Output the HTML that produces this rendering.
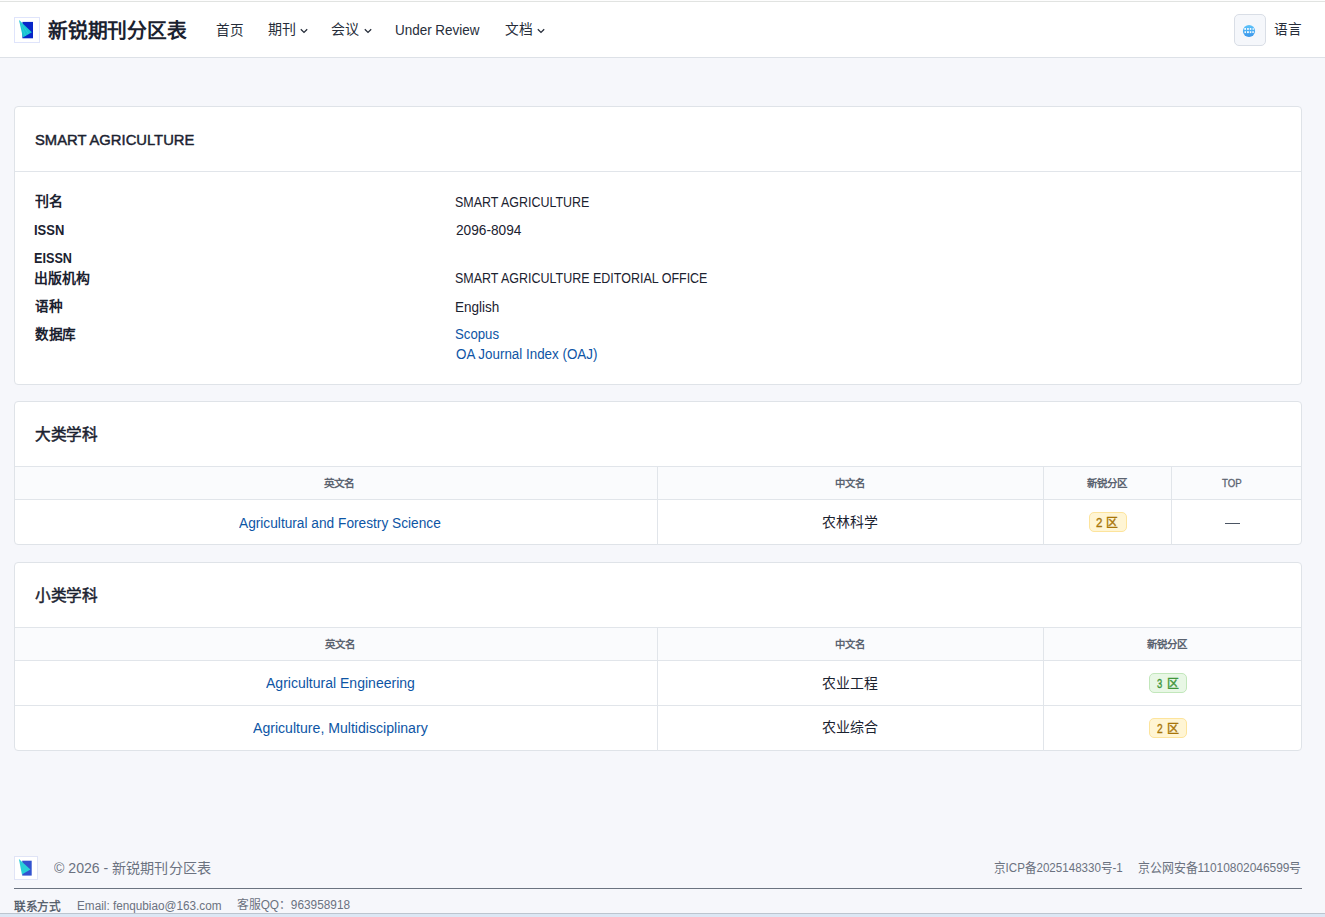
<!DOCTYPE html>
<html lang="zh-CN">
<head>
<meta charset="utf-8">
<title>SMART AGRICULTURE - 新锐期刊分区表</title>
<style>
*{box-sizing:border-box;margin:0;padding:0}
html,body{width:1325px;height:917px;overflow:hidden}
body{font-family:"Liberation Sans",sans-serif;background:#f6f7fb;position:relative}
.topline{position:absolute;left:0;top:0;width:1325px;height:2px;background:#e1e3e1;border-top:1px solid #fdfdfd}
.nav{position:absolute;left:0;top:2px;width:1325px;height:56px;background:#fff;border-bottom:1px solid #dde1e7}
.logo{position:absolute;left:14px;top:17px;width:26px;height:26px;border:1px solid #dfe4fb;background:#fff}
.logo svg{position:absolute;left:0;top:0}
.chev{position:absolute;width:8px;height:6px}
.globe{position:absolute;left:1234px;top:14px;width:32px;height:32px;border:1px solid #d9dee6;border-radius:5px;background:#f5f7fb}
.card{position:absolute;left:14px;width:1288px;background:#fff;border:1px solid #dfe3e8;border-radius:4px}
.hr{position:absolute;left:0;width:1286px;height:1px;background:#e1e5ea}
.thbg{position:absolute;left:0;width:1286px;background:#fafbfd}
.vl{position:absolute;width:1px;background:#e1e5ea}
.badge{position:absolute;width:38px;height:20px;border-radius:5px}
.b2{background:#fff5d4;border:1px solid #fde49c}
.b3{background:#e8f7e5;border:1px solid #c2e7bb}
.dash{position:absolute;width:15px;height:1px;background:#4b5563}
.flogo{position:absolute;left:14px;top:856px;width:24px;height:24px;border:1px solid #e0e4f6;background:#fff}
.flogo svg{position:absolute;left:0;top:0}
.fline{position:absolute;left:14px;top:888px;width:1288px;height:1px;background:#6b7380}
.bstrip{position:absolute;left:0;top:913px;width:1325px;height:4px;background:#dce7f4;border-top:1px solid #bcc5cf}
.t{position:absolute;white-space:nowrap;line-height:1;transform-origin:0 0}
</style>
</head>
<body>

<div class="topline"></div>
<div class="nav"></div>
<div class="logo"><svg width="24" height="24" viewBox="0 0 24 24"><rect x="7.4" y="3.9" width="10.6" height="16.4" fill="#0826c8"/><polygon points="4,2 16.9,14.2 7.9,19.5" fill="#19c4d2"/><path d="M4.6 2.6 L10.5 17.8 M5.2 3.2 L13.5 16.2" stroke="#5fdde6" stroke-width="0.5" opacity="0.6"/></svg></div>
<svg class="chev" style="left:300px;top:28px" viewBox="0 0 8 6"><path d="M0.8 1.2 L4 4.4 L7.2 1.2" fill="none" stroke="#262d3a" stroke-width="1.3"/></svg>
<svg class="chev" style="left:364px;top:28px" viewBox="0 0 8 6"><path d="M0.8 1.2 L4 4.4 L7.2 1.2" fill="none" stroke="#262d3a" stroke-width="1.3"/></svg>
<svg class="chev" style="left:537px;top:28px" viewBox="0 0 8 6"><path d="M0.8 1.2 L4 4.4 L7.2 1.2" fill="none" stroke="#262d3a" stroke-width="1.3"/></svg>
<div class="globe"><svg width="14" height="14" viewBox="0 0 14 14" style="position:absolute;left:7px;top:9px"><defs><linearGradient id="gg" x1="0" y1="0" x2="0" y2="1"><stop offset="0" stop-color="#5cc4fb"/><stop offset="1" stop-color="#3a95ea"/></linearGradient></defs><circle cx="7" cy="7" r="6.1" fill="url(#gg)"/><g fill="#fff" opacity="0.92"><rect x="2.3" y="4" width="1.7" height="1.9"/><rect x="5" y="4.1" width="1.9" height="1.7"/><rect x="7.8" y="4" width="1.5" height="1.9"/><rect x="10.5" y="4.2" width="1.4" height="1.6"/><rect x="2.5" y="7.2" width="1.5" height="1.9"/><rect x="5" y="7.2" width="1.9" height="1.9"/><rect x="7.8" y="7.2" width="1.5" height="1.9"/><rect x="10.3" y="7.2" width="1.5" height="1.8"/></g></svg></div>

<div class="card" style="top:106px;height:279px"><div class="hr" style="top:64px"></div></div>
<div class="card" style="top:401px;height:144px">
  <div class="hr" style="top:64px"></div>
  <div class="thbg" style="top:65px;height:32px"></div>
  <div class="hr" style="top:97px"></div>
  <div class="vl" style="left:642px;top:65px;height:78px"></div>
  <div class="vl" style="left:1028px;top:65px;height:78px"></div>
  <div class="vl" style="left:1156px;top:65px;height:78px"></div>
</div>
<div class="badge b2" style="left:1089px;top:512px"></div>
<div class="dash" style="left:1225px;top:523px"></div>

<div class="card" style="top:562px;height:189px">
  <div class="hr" style="top:64px"></div>
  <div class="thbg" style="top:65px;height:32px"></div>
  <div class="hr" style="top:97px"></div>
  <div class="hr" style="top:142px"></div>
  <div class="vl" style="left:642px;top:65px;height:123px"></div>
  <div class="vl" style="left:1028px;top:65px;height:123px"></div>
</div>
<div class="badge b3" style="left:1149px;top:673px"></div>
<div class="badge b2" style="left:1149px;top:718px"></div>

<div class="flogo"><svg width="22" height="22" viewBox="0 0 22 22"><rect x="7.2" y="3.7" width="9.5" height="14.9" fill="#3253cf"/><polygon points="3.9,2 15.4,12.6 6.9,17.4" fill="#2ad0d8"/></svg></div>
<div class="fline"></div>
<div class="bstrip"></div>

<span class="t" id="brand" style="left:47.60px;top:21.40px;font-size:20px;font-weight:700;color:#1b2230;transform:scaleX(0.9886);">新锐期刊分区表</span>
<span class="t" id="n1" style="left:216.10px;top:22.60px;font-size:14px;font-weight:400;color:#262d3a;transform:scaleX(0.9711);">首页</span>
<span class="t" id="n2" style="left:268.20px;top:22.05px;font-size:14px;font-weight:400;color:#262d3a;transform:scaleX(1.0000);">期刊</span>
<span class="t" id="n3" style="left:331.00px;top:22.05px;font-size:14px;font-weight:400;color:#262d3a;transform:scaleX(1.0000);">会议</span>
<span class="t" id="n4" style="left:395.32px;top:23.28px;font-size:14px;font-weight:400;color:#262d3a;transform:scaleX(0.9607);">Under Review</span>
<span class="t" id="n5" style="left:505.00px;top:22.05px;font-size:14px;font-weight:400;color:#262d3a;transform:scaleX(0.9825);">文档</span>
<span class="t" id="lang" style="left:1274.20px;top:22.05px;font-size:14px;font-weight:400;color:#262d3a;transform:scaleX(0.9728);">语言</span>
<span class="t" id="c1h" style="left:34.56px;top:131.73px;font-size:15px;font-weight:400;color:#1b2230;transform:scaleX(0.9854);-webkit-text-stroke:0.45px #1b2230">SMART AGRICULTURE</span>
<span class="t" id="l1" style="left:35.24px;top:194.39px;font-size:14px;font-weight:700;color:#1b2230;transform:scaleX(0.9938);">刊名</span>
<span class="t" id="l2" style="left:34.12px;top:223.06px;font-size:14px;font-weight:700;color:#1b2230;transform:scaleX(0.9272);">ISSN</span>
<span class="t" id="l3" style="left:34.40px;top:250.90px;font-size:14px;font-weight:700;color:#1b2230;transform:scaleX(0.9031);">EISSN</span>
<span class="t" id="l4" style="left:34.12px;top:270.92px;font-size:14px;font-weight:700;color:#1b2230;transform:scaleX(0.9923);">出版机构</span>
<span class="t" id="l5" style="left:35.48px;top:298.96px;font-size:14px;font-weight:700;color:#1b2230;transform:scaleX(0.9726);">语种</span>
<span class="t" id="l6" style="left:35.40px;top:326.90px;font-size:14px;font-weight:700;color:#1b2230;transform:scaleX(0.9719);">数据库</span>
<span class="t" id="v1" style="left:455.30px;top:194.90px;font-size:14px;font-weight:400;color:#1b2230;transform:scaleX(0.8907);">SMART AGRICULTURE</span>
<span class="t" id="v2" style="left:456.30px;top:222.90px;font-size:14px;font-weight:400;color:#1b2230;transform:scaleX(0.9762);">2096-8094</span>
<span class="t" id="v4" style="left:455.30px;top:270.90px;font-size:14px;font-weight:400;color:#1b2230;transform:scaleX(0.8915);">SMART AGRICULTURE EDITORIAL OFFICE</span>
<span class="t" id="v5" style="left:455.14px;top:299.86px;font-size:14px;font-weight:400;color:#1b2230;transform:scaleX(0.9669);">English</span>
<span class="t" id="v6" style="left:455.30px;top:327.30px;font-size:14px;font-weight:400;color:#0d55a5;transform:scaleX(0.9428);">Scopus</span>
<span class="t" id="v7" style="left:456.30px;top:347.10px;font-size:14px;font-weight:400;color:#0d55a5;transform:scaleX(0.9565);">OA Journal Index (OAJ)</span>
<span class="t" id="c2h" style="left:35.32px;top:427.15px;font-size:16px;font-weight:400;color:#1b2230;transform:scaleX(0.9780);-webkit-text-stroke:0.5px #1b2230">大类学科</span>
<span class="t" id="t2h1" style="left:324.20px;top:478.18px;font-size:10.5px;font-weight:700;color:#5b6370;transform:scaleX(1.0212);">英文名</span>
<span class="t" id="t2h2" style="left:834.50px;top:478.33px;font-size:10.5px;font-weight:700;color:#5b6370;transform:scaleX(0.9869);">中文名</span>
<span class="t" id="t2h3" style="left:1086.60px;top:478.23px;font-size:10.5px;font-weight:700;color:#5b6370;transform:scaleX(1.0000);">新锐分区</span>
<span class="t" id="t2h4" style="left:1222.30px;top:479.44px;font-size:10px;font-weight:400;color:#5b6370;transform:scaleX(0.9658);-webkit-text-stroke:0.3px #5b6370">TOP</span>
<span class="t" id="t2d1" style="left:239.00px;top:515.50px;font-size:14px;font-weight:400;color:#0d55a5;transform:scaleX(0.9787);">Agricultural and Forestry Science</span>
<span class="t" id="t2d2" style="left:822.10px;top:514.90px;font-size:14px;font-weight:400;color:#1b2230;transform:scaleX(0.9936);">农林科学</span>
<span class="t" id="c3h" style="left:35.32px;top:588.15px;font-size:16px;font-weight:400;color:#1b2230;transform:scaleX(0.9780);-webkit-text-stroke:0.5px #1b2230">小类学科</span>
<span class="t" id="t3h1" style="left:324.50px;top:638.72px;font-size:10.5px;font-weight:700;color:#5b6370;transform:scaleX(0.9938);">英文名</span>
<span class="t" id="t3h2" style="left:834.50px;top:639.32px;font-size:10.5px;font-weight:700;color:#5b6370;transform:scaleX(0.9869);">中文名</span>
<span class="t" id="t3h3" style="left:1147.10px;top:639.23px;font-size:10.5px;font-weight:700;color:#5b6370;transform:scaleX(1.0000);">新锐分区</span>
<span class="t" id="t3d1" style="left:265.90px;top:676.30px;font-size:14px;font-weight:400;color:#0d55a5;transform:scaleX(1.0014);">Agricultural Engineering</span>
<span class="t" id="t3d2" style="left:822.10px;top:675.90px;font-size:14px;font-weight:400;color:#1b2230;transform:scaleX(0.9929);">农业工程</span>
<span class="t" id="t3d3" style="left:252.80px;top:721.40px;font-size:14px;font-weight:400;color:#0d55a5;transform:scaleX(1.0069);">Agriculture, Multidisciplinary</span>
<span class="t" id="t3d4" style="left:822.16px;top:720.40px;font-size:14px;font-weight:400;color:#1b2230;transform:scaleX(1.0004);">农业综合</span>
<span class="t" id="bd1a" style="left:1095.60px;top:515.80px;font-size:13px;font-weight:400;color:#a87508;transform:scaleX(0.8857);-webkit-text-stroke:0.4px #a87508">2</span>
<span class="t" id="bd1b" style="left:1106.18px;top:516.98px;font-size:12px;font-weight:400;color:#a87508;transform:scaleX(0.9855);-webkit-text-stroke:0.4px #a87508">区</span>
<span class="t" id="bd2a" style="left:1157.00px;top:676.91px;font-size:13px;font-weight:400;color:#3f963a;transform:scaleX(0.7242);-webkit-text-stroke:0.4px #3f963a">3</span>
<span class="t" id="bd2b" style="left:1167.00px;top:678.15px;font-size:12px;font-weight:400;color:#3f963a;transform:scaleX(0.9909);-webkit-text-stroke:0.4px #3f963a">区</span>
<span class="t" id="bd3a" style="left:1157.00px;top:722.40px;font-size:13px;font-weight:400;color:#a87508;transform:scaleX(0.7857);-webkit-text-stroke:0.4px #a87508">2</span>
<span class="t" id="bd3b" style="left:1167.00px;top:722.55px;font-size:12px;font-weight:400;color:#a87508;transform:scaleX(1.0000);-webkit-text-stroke:0.4px #a87508">区</span>
<span class="t" id="f1" style="left:54.00px;top:860.70px;font-size:14px;font-weight:400;color:#6b7280;transform:scaleX(1.0064);">© 2026 - 新锐期刊分区表</span>
<span class="t" id="f2" style="left:994.10px;top:861.05px;font-size:13px;font-weight:400;color:#6b7280;transform:scaleX(0.8910);">京ICP备2025148330号-1</span>
<span class="t" id="f3" style="left:1138.32px;top:861.19px;font-size:13px;font-weight:400;color:#6b7280;transform:scaleX(0.9166);">京公网安备11010802046599号</span>
<span class="t" id="f4" style="left:13.70px;top:900.70px;font-size:12px;font-weight:400;color:#4b5563;transform:scaleX(0.9711);-webkit-text-stroke:0.3px #4b5563">联系方式</span>
<span class="t" id="f5" style="left:77.40px;top:899.70px;font-size:12px;font-weight:400;color:#6b7280;transform:scaleX(0.9795);">Email: fenqubiao@163.com</span>
<span class="t" id="f6" style="left:237.44px;top:899.36px;font-size:12px;font-weight:400;color:#6b7280;transform:scaleX(0.9853);">客服QQ：963958918</span>

</body>
</html>
